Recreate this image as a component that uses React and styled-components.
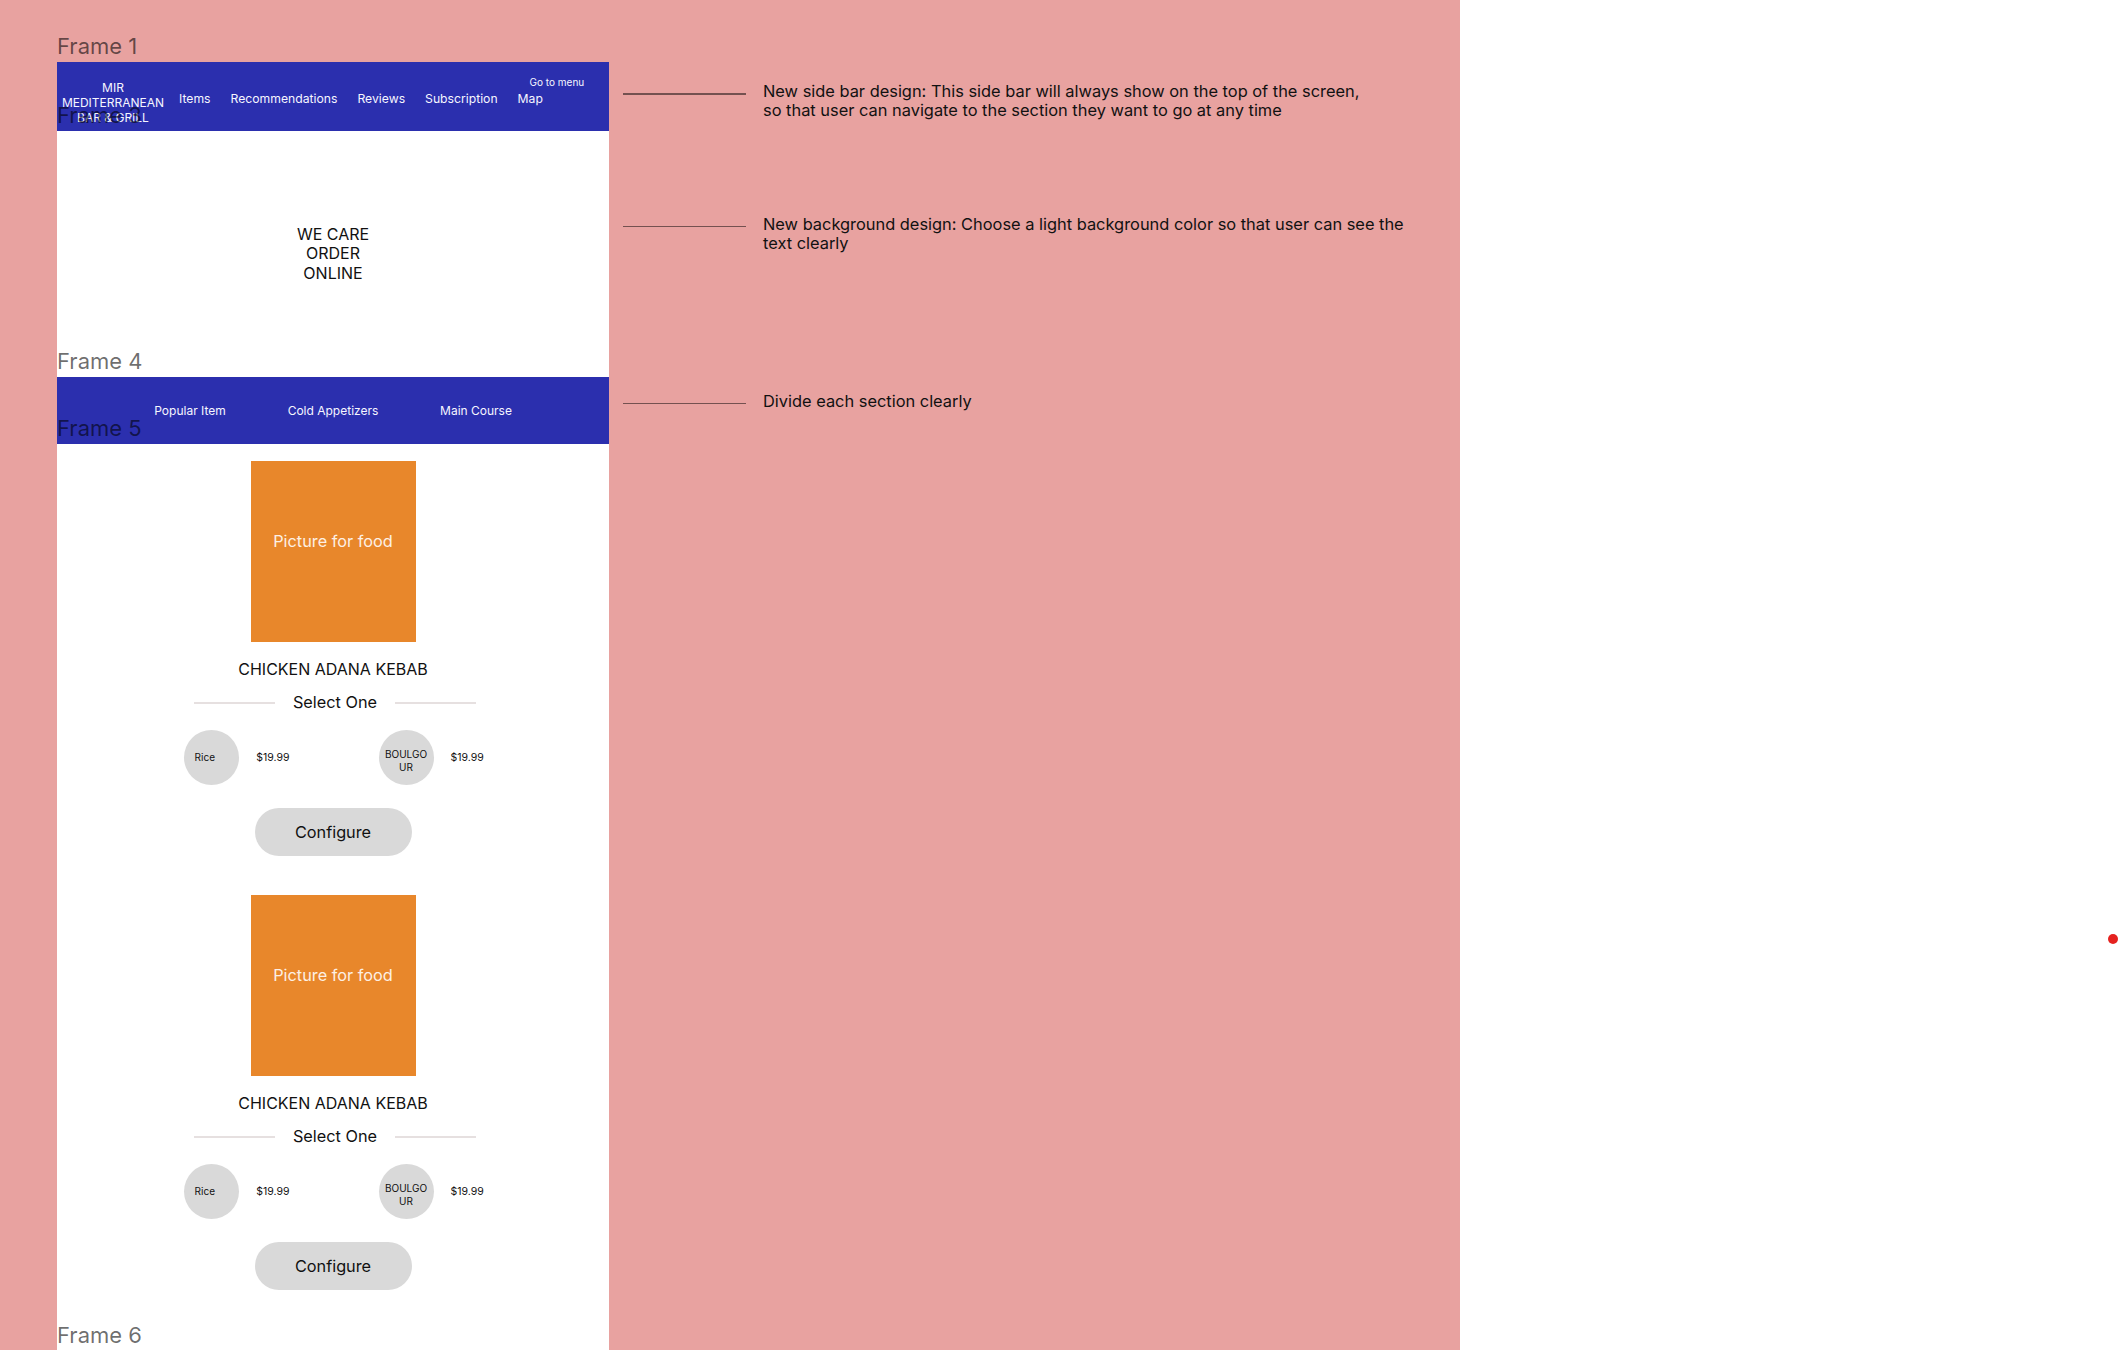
import React from 'react'
import styled, { createGlobalStyle } from 'styled-components'

const GlobalStyle = createGlobalStyle`
  html, body {
    margin: 0;
    padding: 0;
    background: #fff;
  }
  body {
    font-family: Inter, "Noto Sans", sans-serif;
    color: #111;
  }
  * { box-sizing: border-box; }
`

const BLUE = '#2b2fae'

const navLinks = ['Items', 'Recommendations', 'Reviews', 'Subscription']
const sections = ['Popular Item', 'Cold Appetizers', 'Main Course']
// pad nudges the label inside each round choice, as placed in the mockup
const choices = [
  { label: 'Rice', price: '$19.99', pad: '0 14px 0 0' },
  { label: 'BOULGOUR', price: '$19.99', pad: '7px 5px 0' },
]
const dishes = [
  { name: 'CHICKEN ADANA KEBAB', options: choices },
  { name: 'CHICKEN ADANA KEBAB', options: choices },
]

const App = () => {
  return (
    <Page>
      <GlobalStyle />
      <Canvas>
        <Board>
          <Frame>
            <FrameLabel>Frame 1</FrameLabel>
            <NavBar>
              <Brand>MIR<br />MEDITERRANEAN<br />BAR &amp; GRILL</Brand>
              <NavLinks>
                {navLinks.map(l => <NavLink key={l}>{l}</NavLink>)}
                <MapStack>
                  <GoTo>Go to menu</GoTo>
                  <NavLink>Map</NavLink>
                </MapStack>
              </NavLinks>
            </NavBar>
          </Frame>

          <Frame>
            <FrameLabel>Frame 3</FrameLabel>
            <Hero>WE CARE<br />ORDER<br />ONLINE</Hero>
          </Frame>

          <Frame>
            <FrameLabel>Frame 4</FrameLabel>
            <SectionBar>
              {sections.map(s => <SectionLink key={s}>{s}</SectionLink>)}
            </SectionBar>
          </Frame>

          <Frame>
            <FrameLabel>Frame 5</FrameLabel>
            <FoodList>
              {dishes.map((d, i) => (
                <FoodCard key={i}>
                  <Photo>Picture for food</Photo>
                  <DishName>{d.name}</DishName>
                  <Divider>
                    <Rule />
                    <span>Select One</span>
                    <Rule />
                  </Divider>
                  <Options>
                    {d.options.map(o => (
                      <Option key={o.label}>
                        <Choice $pad={o.pad}>{o.label}</Choice>
                        <Price>{o.price}</Price>
                      </Option>
                    ))}
                  </Options>
                  <ConfigureButton>Configure</ConfigureButton>
                </FoodCard>
              ))}
            </FoodList>
          </Frame>

          <Frame>
            <FrameLabel>Frame 6</FrameLabel>
            <Blank />
          </Frame>
        </Board>

        <Notes>
          <Note $top={20}>
            <Leader />
            <NoteText>
              New side bar design: This side bar will always show on the top of the screen,<br />
              so that user can navigate to the section they want to go at any time
            </NoteText>
          </Note>
          <Note $top={94}>
            <Leader />
            <NoteText>
              New background design: Choose a light background color so that user can see the<br />
              text clearly
            </NoteText>
          </Note>
          <Note $top={138}>
            <Leader />
            <NoteText>Divide each section clearly</NoteText>
          </Note>
        </Notes>
      </Canvas>
      <Outside>
        <Dot />
      </Outside>
    </Page>
  )
}

const Page = styled.div`
  display: flex;
  width: 100vw;
  height: 100vh;
  overflow: hidden;
`

const Canvas = styled.div`
  width: 1460px;
  height: 100%;
  flex-shrink: 0;
  background: #e8a2a0;
  display: flex;
  align-items: flex-start;
  padding: 62px 0 0 57px;
`

const Board = styled.div`
  width: 552px;
  flex-shrink: 0;
  display: flex;
  flex-direction: column;
`

const Frame = styled.section`
  position: relative;
  background: #fff;
`

const FrameLabel = styled.div`
  position: absolute;
  left: 0;
  bottom: calc(100% + 3px);
  font-size: 22px;
  line-height: 26px;
  color: rgba(0, 0, 0, 0.58);
  white-space: nowrap;
`

const NavBar = styled.nav`
  height: 69px;
  background: ${BLUE};
  display: flex;
  align-items: flex-start;
  color: #f6f6ff;
  font-size: 12.2px;
`

const Brand = styled.div`
  width: 112px;
  margin-top: 18px;
  text-align: center;
  font-size: 12px;
  line-height: 15px;
`

const NavLinks = styled.div`
  margin: 14px 0 0 10px;
  display: flex;
  align-items: flex-end;
  gap: 20px;
`

const NavLink = styled.span`
  line-height: 16px;
  white-space: nowrap;
`

const MapStack = styled.div`
  display: flex;
  flex-direction: column;
  gap: 3px;
`

const GoTo = styled.span`
  font-size: 10px;
  line-height: 12px;
  margin-left: 12px;
  white-space: nowrap;
`

const Hero = styled.div`
  height: 246px;
  display: flex;
  align-items: center;
  justify-content: center;
  text-align: center;
  font-size: 16px;
  line-height: 19.5px;
`

const SectionBar = styled.div`
  height: 67px;
  background: ${BLUE};
  display: grid;
  grid-template-columns: repeat(3, 143px);
  justify-content: center;
  align-items: center;
  color: #f6f6ff;
  font-size: 12px;
`

const SectionLink = styled.span`
  text-align: center;
`

const FoodList = styled.div`
  display: flex;
  flex-direction: column;
  align-items: center;
  gap: 39px;
  padding: 17px 0 61px;
`

const FoodCard = styled.article`
  display: flex;
  flex-direction: column;
  align-items: center;
`

const Photo = styled.div`
  width: 165px;
  height: 181px;
  background: #e8872b;
  color: #fdf0e4;
  font-size: 16.3px;
  display: flex;
  align-items: center;
  justify-content: center;
  padding-bottom: 22px;
`

const DishName = styled.div`
  margin-top: 18px;
  font-size: 16px;
  line-height: 19px;
`

const Divider = styled.div`
  margin: 14px 0 0 4px;
  display: flex;
  align-items: center;
  gap: 18px;
  font-size: 16.3px;
  line-height: 19px;
`

const Rule = styled.div`
  width: 81px;
  height: 2px;
  background: #e6e0e0;
`

const Options = styled.div`
  margin: 18px 0 0 2px;
  display: flex;
  gap: 89px;
`

const Option = styled.div`
  display: flex;
  align-items: center;
  gap: 17px;
`

const Choice = styled.div`
  width: 55px;
  height: 55px;
  border-radius: 50%;
  background: #d9d9d9;
  display: flex;
  align-items: center;
  justify-content: center;
  text-align: center;
  padding: ${p => p.$pad};
  font-size: 10px;
  line-height: 13px;
  word-break: break-all;
`

const Price = styled.span`
  font-size: 10.5px;
`

const ConfigureButton = styled.button`
  margin-top: 23px;
  width: 157px;
  height: 48px;
  border: none;
  border-radius: 24px;
  background: #d9d9d9;
  color: #111;
  font-family: inherit;
  font-size: 16.3px;
  cursor: pointer;
`

const Blank = styled.div`
  height: 200px;
`

const Notes = styled.div`
  margin-left: 14px;
  display: flex;
  flex-direction: column;
`

const Note = styled.div`
  display: flex;
  align-items: flex-start;
  margin-top: ${p => p.$top}px;
`

const Leader = styled.div`
  width: 123px;
  height: 1.5px;
  margin: 11px 17px 0 0;
  background: rgba(0, 0, 0, 0.5);
  flex-shrink: 0;
`

const NoteText = styled.div`
  font-size: 16.4px;
  line-height: 19.4px;
  white-space: nowrap;
`

const Outside = styled.div`
  flex: 1;
  position: relative;
`

const Dot = styled.div`
  position: absolute;
  left: 648px;
  top: 934px;
  width: 10px;
  height: 10px;
  border-radius: 50%;
  background: #e5221f;
`

export default App
